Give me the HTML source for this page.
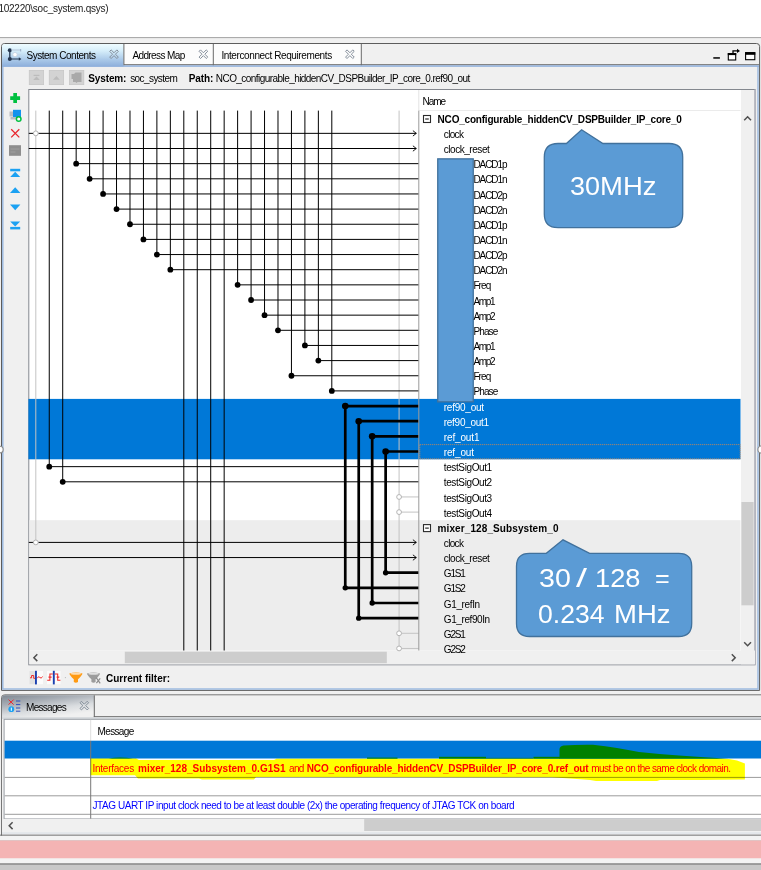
<!DOCTYPE html>
<html><head><meta charset="utf-8"><title>soc_system</title>
<style>
html,body{margin:0;padding:0;}
body{width:761px;height:870px;position:relative;overflow:hidden;background:#f0f0f0;font-family:"Liberation Sans",sans-serif;font-size:10px;color:#000;letter-spacing:-0.3px;}
.a{position:absolute;}
.t{position:absolute;white-space:pre;line-height:14px;height:14px;}
svg{position:absolute;left:0;top:0;}
</style></head><body>
<svg width="761" height="870" viewBox="0 0 761 870">
<defs>
<linearGradient id="tabsel" x1="0" y1="0" x2="0" y2="1"><stop offset="0" stop-color="#effcff"/><stop offset="0.3" stop-color="#d6eefa"/><stop offset="0.7" stop-color="#a9c8e8"/><stop offset="1" stop-color="#8caedb"/></linearGradient>
<linearGradient id="tabmsg" x1="0" y1="0" x2="0.55" y2="1"><stop offset="0" stop-color="#7f8892"/><stop offset="0.35" stop-color="#a7adb5"/><stop offset="0.7" stop-color="#d9dcdf"/><stop offset="1" stop-color="#f0f0f0"/></linearGradient>
</defs>
<rect x="0" y="0" width="761" height="870" fill="#f0f0f0"/>
<rect x="0" y="0" width="761" height="37.1" fill="#fff"/>
<rect x="0" y="37.1" width="761" height="1" fill="#a3a3a3"/>
<!-- Panel 1 -->
<path d="M1.5 690.4 V46.5 Q1.5 43.5 4.5 43.5 H756.6 Q759.6 43.5 759.6 46.5 V690.4 Z" fill="#f0f0f0" stroke="#5c5c5c" stroke-width="1"/>
<path d="M2.8 66 V689 H758 V66" fill="none" stroke="#9dbbe0" stroke-width="1.5"/>
<rect x="124" y="44" width="237.2" height="20.4" fill="#fcfcfc"/>
<rect x="124" y="64.2" width="635" height="1" fill="#6a6a6a"/>
<rect x="2" y="65.3" width="757" height="1.5" fill="#8fb0dc"/>
<path d="M2 66.6 V46.5 Q2 44 4.5 44 H123.6 V66.6 Z" fill="url(#tabsel)"/>
<rect x="123.4" y="44" width="1" height="21.2" fill="#6a6a6a"/>
<rect x="212.8" y="44" width="1" height="21.2" fill="#6a6a6a"/>
<rect x="360.8" y="44" width="1" height="21.2" fill="#6a6a6a"/>
<!-- toolbar buttons -->
<g fill="#d3d3d3" stroke="#c7c7c7" stroke-width="0.8"><rect x="29.3" y="70.4" width="14.3" height="14.2"/><rect x="49.3" y="70.4" width="14.3" height="14.2"/><rect x="69.4" y="70.4" width="14.4" height="14.2"/></g>
<!-- canvas -->
<rect x="28.8" y="89.5" width="726.3" height="575.3" fill="#fff" stroke="#84888f" stroke-width="1"/>
<rect x="419.3" y="110" width="321.2" height="1" fill="#ebebeb"/>
<rect x="418.3" y="90" width="1" height="20.5" fill="#e3e3e3"/>
<rect x="29.3" y="520.2" width="711.2" height="130.3" fill="#ededed"/>
<rect x="28.4" y="398.9" width="712.1" height="60.4" fill="#0078d7"/>
<rect x="419.8" y="444.6" width="320.4" height="14.2" fill="none" stroke="#d08a50" stroke-width="0.9" stroke-dasharray="1 1"/>
<rect x="741" y="90" width="13.4" height="574.3" fill="#f0f0f0"/>
<rect x="754.2" y="89.5" width="1.8" height="575.5" fill="#b4b5bd"/>
<rect x="741.4" y="502" width="12.2" height="103.3" fill="#cdcdcd"/>
<rect x="29.3" y="650.5" width="725.7" height="13.8" fill="#f0f0f0"/>
<rect x="124.8" y="651.7" width="262" height="11.5" fill="#cdcdcd"/>
<!-- Messages panel -->
<path d="M1.5 836 V697.8 Q1.5 694.8 4.5 694.8 H762" fill="none" stroke="#777" stroke-width="1"/>
<path d="M2 717 V697.8 Q2 695.3 4.5 695.3 H94 V717 Z" fill="url(#tabmsg)"/>
<rect x="93.8" y="695.3" width="1" height="21.9" fill="#666"/>
<rect x="93.8" y="716.2" width="668" height="1" fill="#666"/>
<rect x="2" y="717.2" width="760" height="1.6" fill="#d4d7db"/>
<rect x="4.1" y="719.3" width="760" height="99.6" fill="#fff" stroke="#9a9fa6" stroke-width="1"/>
<rect x="4.6" y="740.7" width="757" height="17.8" fill="#0078d7"/>
<rect x="4.6" y="776.9" width="757" height="1" fill="#9c9c9c"/>
<rect x="4.6" y="795.3" width="757" height="1" fill="#9c9c9c"/>
<rect x="4.6" y="813.8" width="757" height="1" fill="#9c9c9c"/>
<rect x="90.2" y="719.8" width="1" height="21" fill="#dedede"/>
<rect x="90.2" y="740.7" width="1" height="78" fill="#777"/>
<rect x="2.3" y="818.9" width="760" height="14" fill="#f0f0f0"/>
<rect x="364.2" y="819.1" width="400" height="11.9" fill="#cdcdcd"/>
<rect x="2" y="832.2" width="760" height="2" fill="#e3e6ea"/>
<rect x="0" y="834.7" width="761" height="1" fill="#5e5e5e"/>
<rect x="0" y="835.8" width="761" height="5" fill="#f3f3f3"/>
<rect x="0" y="840.5" width="761" height="18" fill="#f4b4b4"/>
<rect x="0" y="840.2" width="761" height="0.8" fill="#dcc0c0"/>
<rect x="0" y="858.5" width="761" height="4.6" fill="#f3f3f3"/>
<rect x="0" y="863.1" width="761" height="7" fill="#c8c8c8"/>
<rect x="0" y="863.3" width="761" height="1.5" fill="#8e8e8e"/>
</svg>
<!-- ===== big SVG overlay ===== -->
<svg width="761" height="870" viewBox="0 0 761 870">
<g id="diagram">
<line x1="35.8" y1="110.6" x2="35.8" y2="542.4" stroke="#c3c3c3" stroke-width="1"/>
<line x1="399.09" y1="110.6" x2="399.09" y2="650.5" stroke="#c3c3c3" stroke-width="1"/>
<line x1="399.09" y1="496.95" x2="418.8" y2="496.95" stroke="#c3c3c3" stroke-width="1"/>
<line x1="399.09" y1="512.1" x2="418.8" y2="512.1" stroke="#c3c3c3" stroke-width="1"/>
<line x1="399.09" y1="633.3" x2="418.8" y2="633.3" stroke="#c3c3c3" stroke-width="1"/>
<line x1="399.09" y1="648.45" x2="418.8" y2="648.45" stroke="#c3c3c3" stroke-width="1"/>
<line x1="49.25" y1="110.6" x2="49.25" y2="466.65" stroke="#000" stroke-width="1"/>
<line x1="49.25" y1="466.65" x2="418.8" y2="466.65" stroke="#000" stroke-width="1"/>
<line x1="62.71" y1="110.6" x2="62.71" y2="481.8" stroke="#000" stroke-width="1"/>
<line x1="62.71" y1="481.8" x2="418.8" y2="481.8" stroke="#000" stroke-width="1"/>
<line x1="76.16" y1="110.6" x2="76.16" y2="163.65" stroke="#000" stroke-width="1"/>
<line x1="76.16" y1="163.65" x2="418.8" y2="163.65" stroke="#000" stroke-width="1"/>
<line x1="89.62" y1="110.6" x2="89.62" y2="178.8" stroke="#000" stroke-width="1"/>
<line x1="89.62" y1="178.8" x2="418.8" y2="178.8" stroke="#000" stroke-width="1"/>
<line x1="103.08" y1="110.6" x2="103.08" y2="193.95" stroke="#000" stroke-width="1"/>
<line x1="103.08" y1="193.95" x2="418.8" y2="193.95" stroke="#000" stroke-width="1"/>
<line x1="116.53" y1="110.6" x2="116.53" y2="209.1" stroke="#000" stroke-width="1"/>
<line x1="116.53" y1="209.1" x2="418.8" y2="209.1" stroke="#000" stroke-width="1"/>
<line x1="129.99" y1="110.6" x2="129.99" y2="224.25" stroke="#000" stroke-width="1"/>
<line x1="129.99" y1="224.25" x2="418.8" y2="224.25" stroke="#000" stroke-width="1"/>
<line x1="143.44" y1="110.6" x2="143.44" y2="239.4" stroke="#000" stroke-width="1"/>
<line x1="143.44" y1="239.4" x2="418.8" y2="239.4" stroke="#000" stroke-width="1"/>
<line x1="156.89" y1="110.6" x2="156.89" y2="254.55" stroke="#000" stroke-width="1"/>
<line x1="156.89" y1="254.55" x2="418.8" y2="254.55" stroke="#000" stroke-width="1"/>
<line x1="170.35" y1="110.6" x2="170.35" y2="269.7" stroke="#000" stroke-width="1"/>
<line x1="170.35" y1="269.7" x2="418.8" y2="269.7" stroke="#000" stroke-width="1"/>
<line x1="237.62" y1="110.6" x2="237.62" y2="284.85" stroke="#000" stroke-width="1"/>
<line x1="237.62" y1="284.85" x2="418.8" y2="284.85" stroke="#000" stroke-width="1"/>
<line x1="251.08" y1="110.6" x2="251.08" y2="300.0" stroke="#000" stroke-width="1"/>
<line x1="251.08" y1="300.0" x2="418.8" y2="300.0" stroke="#000" stroke-width="1"/>
<line x1="264.54" y1="110.6" x2="264.54" y2="315.15" stroke="#000" stroke-width="1"/>
<line x1="264.54" y1="315.15" x2="418.8" y2="315.15" stroke="#000" stroke-width="1"/>
<line x1="277.99" y1="110.6" x2="277.99" y2="330.3" stroke="#000" stroke-width="1"/>
<line x1="277.99" y1="330.3" x2="418.8" y2="330.3" stroke="#000" stroke-width="1"/>
<line x1="291.44" y1="110.6" x2="291.44" y2="375.75" stroke="#000" stroke-width="1"/>
<line x1="291.44" y1="375.75" x2="418.8" y2="375.75" stroke="#000" stroke-width="1"/>
<line x1="304.9" y1="110.6" x2="304.9" y2="345.45" stroke="#000" stroke-width="1"/>
<line x1="304.9" y1="345.45" x2="418.8" y2="345.45" stroke="#000" stroke-width="1"/>
<line x1="318.36" y1="110.6" x2="318.36" y2="360.6" stroke="#000" stroke-width="1"/>
<line x1="318.36" y1="360.6" x2="418.8" y2="360.6" stroke="#000" stroke-width="1"/>
<line x1="331.81" y1="110.6" x2="331.81" y2="390.9" stroke="#000" stroke-width="1"/>
<line x1="331.81" y1="390.9" x2="418.8" y2="390.9" stroke="#000" stroke-width="1"/>
<line x1="183.81" y1="110.6" x2="183.81" y2="650.5" stroke="#000" stroke-width="1"/>
<line x1="197.26" y1="110.6" x2="197.26" y2="650.5" stroke="#000" stroke-width="1"/>
<line x1="210.71" y1="110.6" x2="210.71" y2="650.5" stroke="#000" stroke-width="1"/>
<line x1="224.17" y1="110.6" x2="224.17" y2="650.5" stroke="#000" stroke-width="1"/>
<line x1="28.8" y1="133.35" x2="416.3" y2="133.35" stroke="#000" stroke-width="1"/>
<polyline points="412.9,130.65 416.3,133.35 412.9,136.04999999999998" fill="none" stroke="#000" stroke-width="0.9"/>
<line x1="28.8" y1="148.5" x2="416.3" y2="148.5" stroke="#000" stroke-width="1"/>
<polyline points="412.9,145.8 416.3,148.5 412.9,151.2" fill="none" stroke="#000" stroke-width="0.9"/>
<line x1="28.8" y1="542.4" x2="416.3" y2="542.4" stroke="#000" stroke-width="1"/>
<polyline points="412.9,539.6999999999999 416.3,542.4 412.9,545.1" fill="none" stroke="#000" stroke-width="0.9"/>
<line x1="28.8" y1="557.55" x2="416.3" y2="557.55" stroke="#000" stroke-width="1"/>
<polyline points="412.9,554.8499999999999 416.3,557.55 412.9,560.25" fill="none" stroke="#000" stroke-width="0.9"/>
<line x1="345.26" y1="406.05" x2="345.26" y2="587.85" stroke="#000" stroke-width="2.7"/>
<line x1="345.26" y1="406.05" x2="418.8" y2="406.05" stroke="#000" stroke-width="2.7"/>
<line x1="345.26" y1="587.85" x2="418.8" y2="587.85" stroke="#000" stroke-width="2.7"/>
<line x1="358.72" y1="421.2" x2="358.72" y2="618.15" stroke="#000" stroke-width="2.7"/>
<line x1="358.72" y1="421.2" x2="418.8" y2="421.2" stroke="#000" stroke-width="2.7"/>
<line x1="358.72" y1="618.15" x2="418.8" y2="618.15" stroke="#000" stroke-width="2.7"/>
<line x1="372.18" y1="436.35" x2="372.18" y2="603.0" stroke="#000" stroke-width="2.7"/>
<line x1="372.18" y1="436.35" x2="418.8" y2="436.35" stroke="#000" stroke-width="2.7"/>
<line x1="372.18" y1="603.0" x2="418.8" y2="603.0" stroke="#000" stroke-width="2.7"/>
<line x1="385.63" y1="451.5" x2="385.63" y2="572.7" stroke="#000" stroke-width="2.7"/>
<line x1="385.63" y1="451.5" x2="418.8" y2="451.5" stroke="#000" stroke-width="2.7"/>
<line x1="385.63" y1="572.7" x2="418.8" y2="572.7" stroke="#000" stroke-width="2.7"/>
<circle cx="49.25" cy="466.65" r="2.9" fill="#000"/>
<circle cx="62.71" cy="481.8" r="2.9" fill="#000"/>
<circle cx="76.16" cy="163.65" r="2.9" fill="#000"/>
<circle cx="89.62" cy="178.8" r="2.9" fill="#000"/>
<circle cx="103.08" cy="193.95" r="2.9" fill="#000"/>
<circle cx="116.53" cy="209.1" r="2.9" fill="#000"/>
<circle cx="129.99" cy="224.25" r="2.9" fill="#000"/>
<circle cx="143.44" cy="239.4" r="2.9" fill="#000"/>
<circle cx="156.89" cy="254.55" r="2.9" fill="#000"/>
<circle cx="170.35" cy="269.7" r="2.9" fill="#000"/>
<circle cx="237.62" cy="284.85" r="2.9" fill="#000"/>
<circle cx="251.08" cy="300.0" r="2.9" fill="#000"/>
<circle cx="264.54" cy="315.15" r="2.9" fill="#000"/>
<circle cx="277.99" cy="330.3" r="2.9" fill="#000"/>
<circle cx="291.44" cy="375.75" r="2.9" fill="#000"/>
<circle cx="304.9" cy="345.45" r="2.9" fill="#000"/>
<circle cx="318.36" cy="360.6" r="2.9" fill="#000"/>
<circle cx="331.81" cy="390.9" r="2.9" fill="#000"/>
<circle cx="345.26" cy="406.05" r="3.3" fill="#000"/>
<circle cx="345.26" cy="587.85" r="2.7" fill="#000"/>
<circle cx="358.72" cy="421.2" r="3.3" fill="#000"/>
<circle cx="358.72" cy="618.15" r="2.7" fill="#000"/>
<circle cx="372.18" cy="436.35" r="3.3" fill="#000"/>
<circle cx="372.18" cy="603.0" r="2.7" fill="#000"/>
<circle cx="385.63" cy="451.5" r="3.3" fill="#000"/>
<circle cx="385.63" cy="572.7" r="2.7" fill="#000"/>
<circle cx="35.8" cy="133.35" r="2.4" fill="#fff" stroke="#b4b4b4" stroke-width="1"/>
<circle cx="35.8" cy="542.4" r="2.4" fill="#fff" stroke="#b4b4b4" stroke-width="1"/>
<circle cx="399.09" cy="496.95" r="2.4" fill="#fff" stroke="#b4b4b4" stroke-width="1"/>
<circle cx="399.09" cy="512.1" r="2.4" fill="#fff" stroke="#b4b4b4" stroke-width="1"/>
<circle cx="399.09" cy="633.3" r="2.4" fill="#fff" stroke="#b4b4b4" stroke-width="1"/>
<circle cx="399.09" cy="648.45" r="2.4" fill="#fff" stroke="#b4b4b4" stroke-width="1"/>
<line x1="418.8" y1="110.6" x2="418.8" y2="650.5" stroke="#9a9a9a" stroke-width="1"/>
</g>
<!-- tree expand boxes -->
<g fill="#fff" stroke="#2a2a2a" stroke-width="1.1">
<rect x="423.5" y="115.5" width="7" height="7"/><rect x="423.5" y="524.6" width="7" height="7"/>
</g>
<g stroke="#000" stroke-width="1"><line x1="425.2" y1="119" x2="428.8" y2="119"/><line x1="425.2" y1="528.1" x2="428.8" y2="528.1"/></g>

<!-- highlight scribbles in messages -->
<path d="M90.6 758.5 L136 758.5 L139 760 L274 760 L276.5 758.7 L729 758.9 L737 760.6 L744.9 763.6 L744.9 779.6 L700 779.9 L660 780 L657 781.1 L596 781.1 L590 780 L570 778.6 L552 777.3 L256 777.1 L254 779.5 L202 779.5 L199 778.6 L138 778.6 L135 775.2 L90.6 775.2 Z" fill="#ffff00" style="mix-blend-mode:multiply"/>
<g fill="#008000">
<path d="M108.5 758.6 Q120 756.2 133 758.6 Z"/>
<rect x="367" y="757.6" width="30.5" height="1.1"/>
<rect x="439" y="756.8" width="47" height="1.9"/>
<rect x="486" y="757.8" width="47.5" height="0.9" fill="#0a7a3a"/>
<rect x="533.5" y="756.8" width="26.5" height="1.9"/>
<path d="M559.5 758.7 L559.5 749 Q559.8 746.2 563.5 745.6 Q576 744.6 593 744.8 Q618 747.8 639 752 Q660 754.2 679 755.5 Q705 757.6 729 758.7 Z"/>
</g>

<!-- blue rectangle -->
<rect x="437.75" y="158.85" width="35.5" height="243" fill="#5b9bd5" stroke="#41719c" stroke-width="1.3"/>
<!-- callout 1 -->
<path d="M558 143.5 L566.4 143.5 L581.6 129.8 L602.9 143.5 L669 143.5 Q682.7 143.5 682.7 157.2 L682.7 214 Q682.7 227.7 669 227.7 L558 227.7 Q544.3 227.7 544.3 214 L544.3 157.2 Q544.3 143.5 558 143.5 Z" fill="#5b9bd5" stroke="#41719c" stroke-width="1.3"/>
<!-- callout 2 -->
<path d="M529.5 553.3 L546.3 553.3 L563 539.8 L589.6 553.3 L678.7 553.3 Q691.7 553.3 691.7 566.3 L691.7 623.5 Q691.7 636.5 678.7 636.5 L529.5 636.5 Q516.5 636.5 516.5 623.5 L516.5 566.3 Q516.5 553.3 529.5 553.3 Z" fill="#5b9bd5" stroke="#41719c" stroke-width="1.3"/>

<!-- scroll arrows -->
<g fill="none" stroke="#505050" stroke-width="1.5">
<polyline points="744.2,120.3 747.6,116.8 751,120.3"/>
<polyline points="744.2,642.2 747.6,645.7 751,642.2"/>
<polyline points="731.8,654.3 735.2,657.7 731.8,661.1"/>
<polyline points="37.3,654.3 33.9,657.7 37.3,661.1"/>
<polyline points="12.6,822.3 9.2,825.7 12.6,829.1"/>
</g>

<!-- left toolbar icons -->
<g>
<path d="M13.3 93.1h3.7v3.1h3.1v3.7h-3.1v3.1h-3.7v-3.1h-3.1v-3.7h3.1z" fill="#00c040"/>
<!-- add-connection icon -->
<rect x="9.5" y="111.5" width="5" height="5" fill="#b9bcc2"/><rect x="13" y="109.8" width="8" height="8.5" fill="#1292ee"/><rect x="10.5" y="117" width="6" height="2.5" fill="#b9bcc2"/>
<circle cx="18.7" cy="119" r="2.3" fill="#fff" stroke="#00c040" stroke-width="1.5"/>
<!-- red X -->
<path d="M11.2 129.3 L19.3 137.4 M19.3 129.3 L11.2 137.4" stroke="#e8262d" stroke-width="1.3" fill="none"/>
<!-- gray box -->
<rect x="9" y="145.2" width="12" height="10.6" fill="#8e8e8e"/><path d="M10.5 149h9M10.5 152h5" stroke="#a5a5a5" stroke-width="0.8"/>
<!-- arrows -->
<g fill="#1ba1f2">
<rect x="10.2" y="168.8" width="10" height="2.5"/><path d="M10.2 177 L15.2 171.8 L20.2 177 Z"/>
<path d="M10 193 L15.2 187.3 L20.4 193 Z"/>
<path d="M10 204.4 L20.4 204.4 L15.2 210.2 Z"/>
<path d="M10.2 221.4 L20.2 221.4 L15.2 226.6 Z"/><rect x="10.2" y="226.9" width="10" height="2.5"/>
</g>
</g>

<!-- toolbar button glyphs -->
<g fill="#bcbcbc">
<rect x="33.6" y="74.8" width="5.8" height="1.2"/><path d="M33.2 80 L36.5 76.4 L39.8 80 Z"/>
<path d="M53 79.8 L56.4 76 L59.8 79.8 Z"/>
<path d="M71.5 74 L74 74 L75.5 72.5 L81.5 72.5 L81.5 82 L77.5 82 L76.5 83 L75.5 82 L73 82 L73 79 L71.5 79 Z" fill="#a9a9a9"/>
</g>

<!-- tab icon: system contents -->
<g>
<line x1="9.8" y1="50.5" x2="9.8" y2="58.8" stroke="#24364f" stroke-width="1.3"/>
<circle cx="9.8" cy="50.2" r="2" fill="#24364f"/><circle cx="9.8" cy="59" r="2" fill="#24364f"/>
<line x1="11" y1="50" x2="21" y2="50" stroke="#b5c4d8" stroke-width="1"/><line x1="20.7" y1="49" x2="20.7" y2="51.5" stroke="#8ea0ba" stroke-width="0.8"/>
<line x1="11" y1="59" x2="20" y2="59" stroke="#24364f" stroke-width="1"/><path d="M18.8 57.3 L21.4 59 L18.8 60.7 Z" fill="#24364f"/>
<circle cx="15" cy="54.6" r="2.2" fill="#fff" stroke="#c8d3e2" stroke-width="0.8"/><line x1="17.4" y1="54.6" x2="20.6" y2="54.6" stroke="#c8d3e2" stroke-width="0.8"/>
</g>
<!-- tab close icons -->
<g fill="none" stroke="#7f8a96" stroke-width="0.8">
<path id="cx" d="M-3.6 -2.4 L-2.4 -3.6 L0 -1.2 L2.4 -3.6 L3.6 -2.4 L1.2 0 L3.6 2.4 L2.4 3.6 L0 1.2 L-2.4 3.6 L-3.6 2.4 L-1.2 0 Z" transform="translate(114,54.2) scale(1.2)"/>
<path d="M-3.6 -2.4 L-2.4 -3.6 L0 -1.2 L2.4 -3.6 L3.6 -2.4 L1.2 0 L3.6 2.4 L2.4 3.6 L0 1.2 L-2.4 3.6 L-3.6 2.4 L-1.2 0 Z" transform="translate(203.4,54.2) scale(1.2)"/>
<path d="M-3.6 -2.4 L-2.4 -3.6 L0 -1.2 L2.4 -3.6 L3.6 -2.4 L1.2 0 L3.6 2.4 L2.4 3.6 L0 1.2 L-2.4 3.6 L-3.6 2.4 L-1.2 0 Z" transform="translate(349.9,54.2) scale(1.2)"/>
<path d="M-3.6 -2.4 L-2.4 -3.6 L0 -1.2 L2.4 -3.6 L3.6 -2.4 L1.2 0 L3.6 2.4 L2.4 3.6 L0 1.2 L-2.4 3.6 L-3.6 2.4 L-1.2 0 Z" transform="translate(84.3,705.6) scale(1.2)"/>
</g>
<!-- window buttons -->
<g>
<rect x="713.3" y="57.2" width="6.6" height="1.5" fill="#000"/>
<rect x="728.3" y="53.6" width="7.4" height="6.4" fill="#fff" stroke="#000" stroke-width="1.1"/><rect x="727.8" y="53.1" width="8.4" height="2" fill="#000"/>
<path d="M733 53 L733 50.9 L738 50.9" fill="none" stroke="#000" stroke-width="1.3"/><path d="M737 48.8 L740 50.9 L737 53 Z" fill="#000"/>
<rect x="745.6" y="52.7" width="9.2" height="7" fill="#fff" stroke="#000" stroke-width="1.1"/><rect x="745.1" y="52.2" width="10.2" height="2.6" fill="#000"/>
</g>

<!-- filter icons -->
<g>
<rect x="29.5" y="671" width="6" height="13.2" fill="#e1e1e1"/><rect x="36" y="671" width="7" height="13.2" fill="#fbfbfb"/>
<rect x="35" y="670.8" width="1.9" height="13.6" fill="#1b40b0"/>
<path d="M30 677.8 H31.6 V675.5 H33.7 V678.3 H35" fill="none" stroke="#ee2a2a" stroke-width="1"/>
<path d="M37.4 678.2 Q38.4 675.6 39.7 677.4 T42.7 676.6" fill="none" stroke="#ee2a2a" stroke-width="1"/>
<rect x="47" y="671" width="13.6" height="13.2" fill="#fbfbfb"/>
<rect x="52.85" y="670.8" width="1.9" height="13.6" fill="#1b40b0"/>
<path d="M47.2 680.3 H49.9 V674 H52.8 M48.5 677.1 H51.6" fill="none" stroke="#ee2a2a" stroke-width="1.05"/>
<path d="M54.9 674 H57.7 V680.3 H60.4 M56.6 677.1 H59.3" fill="none" stroke="#ee2a2a" stroke-width="1.05"/>
<rect x="64.9" y="677.2" width="0.9" height="0.9" fill="#a8a8a8"/>
<path d="M69.3 673.6 Q69.6 675.4 73.8 679.3 L73.8 682 Q75.9 683.5 78 682 L78 679.3 Q82.2 675.4 82.5 673.6 Q75.9 671.2 69.3 673.6 Z" fill="#ff9a12"/>
<ellipse cx="75.9" cy="673.8" rx="5.2" ry="0.95" fill="#ffdcae"/>
<path d="M86.9 673.6 Q87.2 675.4 91.4 679.3 L91.4 682 Q93.5 683.5 95.6 682 L95.6 679.3 Q99.8 675.4 100.1 673.6 Q93.5 671.2 86.9 673.6 Z" fill="#9c9c9c"/>
<ellipse cx="93.5" cy="673.8" rx="5.2" ry="0.95" fill="#e0e0e0"/>
<path d="M96.2 677.6 L100.2 683.4 M100.2 678.4 L96.4 683.2" stroke="#8c8c8c" stroke-width="1.2" fill="none"/>
</g>

<!-- messages tab icon -->
<g>
<path d="M8.6 699.6 L13.6 704.6 M13.6 699.6 L8.6 704.6" stroke="#e8262d" stroke-width="1"/>
<circle cx="11.3" cy="709.2" r="2.9" fill="#1ba1f2"/><rect x="10.8" y="707.6" width="1" height="3.2" fill="#fff"/>
<path d="M16 701 L20.3 701 M16 704.6 L20.3 704.6 M16 708 L20.3 708 M16 711.2 L20.3 711.2" stroke="#2b4fc0" stroke-width="1"/>
</g>
<!-- sash circles -->
<circle cx="-0.2" cy="449.6" r="3.35" fill="#fff" stroke="#8e8e8e" stroke-width="1.15"/>
<circle cx="761.6" cy="449.5" r="3.7" fill="#fff" stroke="#8e8e8e" stroke-width="1.15"/>
</svg>

<!-- ===== texts ===== -->
<span class="t" style="left:437.6px;top:112.75px;font-weight:700;letter-spacing:-0.204px;">NCO_configurable_hiddenCV_DSPBuilder_IP_core_0</span>
<span class="t" style="left:443.8px;top:127.90px;letter-spacing:-0.659px;">clock</span>
<span class="t" style="left:443.8px;top:143.05px;letter-spacing:-0.462px;">clock_reset</span>
<span class="t" style="left:473.4px;top:158.20px;letter-spacing:-1.078px;">DACD1p</span>
<span class="t" style="left:473.4px;top:173.35px;letter-spacing:-1.078px;">DACD1n</span>
<span class="t" style="left:473.4px;top:188.50px;letter-spacing:-1.078px;">DACD2p</span>
<span class="t" style="left:473.4px;top:203.65px;letter-spacing:-1.078px;">DACD2n</span>
<span class="t" style="left:473.4px;top:218.80px;letter-spacing:-1.078px;">DACD1p</span>
<span class="t" style="left:473.4px;top:233.95px;letter-spacing:-1.078px;">DACD1n</span>
<span class="t" style="left:473.4px;top:249.10px;letter-spacing:-1.078px;">DACD2p</span>
<span class="t" style="left:473.4px;top:264.25px;letter-spacing:-1.078px;">DACD2n</span>
<span class="t" style="left:473.4px;top:279.40px;letter-spacing:-0.891px;">Freq</span>
<span class="t" style="left:473.4px;top:294.55px;letter-spacing:-1.281px;">Amp1</span>
<span class="t" style="left:473.4px;top:309.70px;letter-spacing:-1.281px;">Amp2</span>
<span class="t" style="left:473.4px;top:324.85px;letter-spacing:-0.872px;">Phase</span>
<span class="t" style="left:473.4px;top:340.00px;letter-spacing:-1.281px;">Amp1</span>
<span class="t" style="left:473.4px;top:355.15px;letter-spacing:-1.281px;">Amp2</span>
<span class="t" style="left:473.4px;top:370.30px;letter-spacing:-0.891px;">Freq</span>
<span class="t" style="left:473.4px;top:385.45px;letter-spacing:-0.872px;">Phase</span>
<span class="t" style="left:443.8px;top:400.60px;color:#fff;letter-spacing:-0.252px;">ref90_out</span>
<span class="t" style="left:443.8px;top:415.75px;color:#fff;letter-spacing:-0.283px;">ref90_out1</span>
<span class="t" style="left:443.8px;top:430.90px;color:#fff;letter-spacing:-0.150px;">ref_out1</span>
<span class="t" style="left:443.8px;top:446.05px;color:#fff;letter-spacing:-0.163px;">ref_out</span>
<span class="t" style="left:443.8px;top:461.20px;letter-spacing:-0.388px;">testSigOut1</span>
<span class="t" style="left:443.8px;top:476.35px;letter-spacing:-0.388px;">testSigOut2</span>
<span class="t" style="left:443.8px;top:491.50px;letter-spacing:-0.388px;">testSigOut3</span>
<span class="t" style="left:443.8px;top:506.65px;letter-spacing:-0.388px;">testSigOut4</span>
<span class="t" style="left:437.6px;top:521.80px;font-weight:700;letter-spacing:0.096px;">mixer_128_Subsystem_0</span>
<span class="t" style="left:443.8px;top:536.95px;letter-spacing:-0.659px;">clock</span>
<span class="t" style="left:443.8px;top:552.10px;letter-spacing:-0.462px;">clock_reset</span>
<span class="t" style="left:443.8px;top:567.25px;letter-spacing:-1.145px;">G1S1</span>
<span class="t" style="left:443.8px;top:582.40px;letter-spacing:-1.145px;">G1S2</span>
<span class="t" style="left:443.8px;top:597.55px;letter-spacing:-0.365px;">G1_refIn</span>
<span class="t" style="left:443.8px;top:612.70px;letter-spacing:-0.405px;">G1_ref90In</span>
<span class="t" style="left:443.8px;top:627.85px;letter-spacing:-1.145px;">G2S1</span>
<span class="t" style="left:443.8px;top:643.00px;letter-spacing:-1.145px;">G2S2</span>
<span class="t" style="left:-1.6px;top:1.50px;color:#1a1a1a;letter-spacing:-0.245px;">102220\soc_system.qsys)</span>
<span class="t" style="left:26.5px;top:48.80px;letter-spacing:-0.477px;">System Contents</span>
<span class="t" style="left:132.4px;top:48.80px;letter-spacing:-0.611px;">Address Map</span>
<span class="t" style="left:221.4px;top:48.80px;letter-spacing:-0.387px;">Interconnect Requirements</span>
<span class="t" style="left:88.3px;top:71.60px;font-weight:700;letter-spacing:-0.129px;">System:</span>
<span class="t" style="left:130.2px;top:71.60px;letter-spacing:-0.580px;">soc_system</span>
<span class="t" style="left:188.7px;top:71.60px;font-weight:700;letter-spacing:-0.080px;">Path:</span>
<span class="t" style="left:215.8px;top:71.60px;letter-spacing:-0.557px;">NCO_configurable_hiddenCV_DSPBuilder_IP_core_0.ref90_out</span>
<span class="t" style="left:422.6px;top:95.40px;letter-spacing:-1.047px;">Name</span>
<span class="t" style="left:106px;top:672.10px;font-weight:700;letter-spacing:0.006px;">Current filter:</span>
<span class="t" style="left:26px;top:700.50px;letter-spacing:-0.697px;">Messages</span>
<span class="t" style="left:97.6px;top:725.40px;letter-spacing:-0.654px;">Message</span>
<span class="t" style="left:570.2px;top:170.20px;color:#fff;font-size:25.2px;line-height:32px;height:32px;letter-spacing:0;transform-origin:0 50%;transform:scaleX(1.0702);">30</span>
<span class="t" style="left:600.2px;top:170.20px;color:#fff;font-size:25.2px;line-height:32px;height:32px;letter-spacing:0;transform-origin:0 50%;transform:scaleX(1.0915);">MHz</span>
<span class="t" style="left:538.6px;top:562.00px;color:#fff;font-size:25.2px;line-height:32px;height:32px;letter-spacing:0;transform-origin:0 50%;transform:scaleX(1.1344);">30</span>
<span class="t" style="left:575.7px;top:562.00px;color:#fff;font-size:25.2px;line-height:32px;height:32px;letter-spacing:0;transform-origin:0 50%;transform:scaleX(1.5714);">/</span>
<span class="t" style="left:595.2px;top:562.00px;color:#fff;font-size:25.2px;line-height:32px;height:32px;letter-spacing:0;transform-origin:0 50%;transform:scaleX(1.0801);">128</span>
<span class="t" style="left:654.6px;top:562.00px;color:#fff;font-size:25.2px;line-height:32px;height:32px;letter-spacing:0;transform-origin:0 50%;transform:scaleX(0.9987);">=</span>
<span class="t" style="left:538px;top:598.00px;color:#fff;font-size:25.2px;line-height:32px;height:32px;letter-spacing:0;transform-origin:0 50%;transform:scaleX(1.0550);">0.234</span>
<span class="t" style="left:614px;top:598.00px;color:#fff;font-size:25.2px;line-height:32px;height:32px;letter-spacing:0;transform-origin:0 50%;transform:scaleX(1.0915);">MHz</span>
<span class="t" style="left:92.5px;top:762.40px;color:#ff0000;letter-spacing:-0.252px;">Interfaces</span>
<span class="t" style="left:138px;top:762.40px;font-weight:700;color:#ff0000;letter-spacing:0.007px;">mixer_128_Subsystem_0.G1S1</span>
<span class="t" style="left:289px;top:762.40px;color:#ff0000;letter-spacing:-0.663px;">and</span>
<span class="t" style="left:306.8px;top:762.40px;font-weight:700;color:#ff0000;letter-spacing:-0.155px;">NCO_configurable_hiddenCV_DSPBuilder_IP_core_0.ref_out</span>
<span class="t" style="left:591.2px;top:762.40px;color:#ff0000;letter-spacing:-0.549px;">must be on the same clock domain.</span>
<span class="t" style="left:92.5px;top:799.20px;color:#0000ff;letter-spacing:-0.437px;">JTAG UART IP input clock need to be at least double (2x) the operating frequency of JTAG TCK on board</span>
<!-- message rows -->
</body></html>
